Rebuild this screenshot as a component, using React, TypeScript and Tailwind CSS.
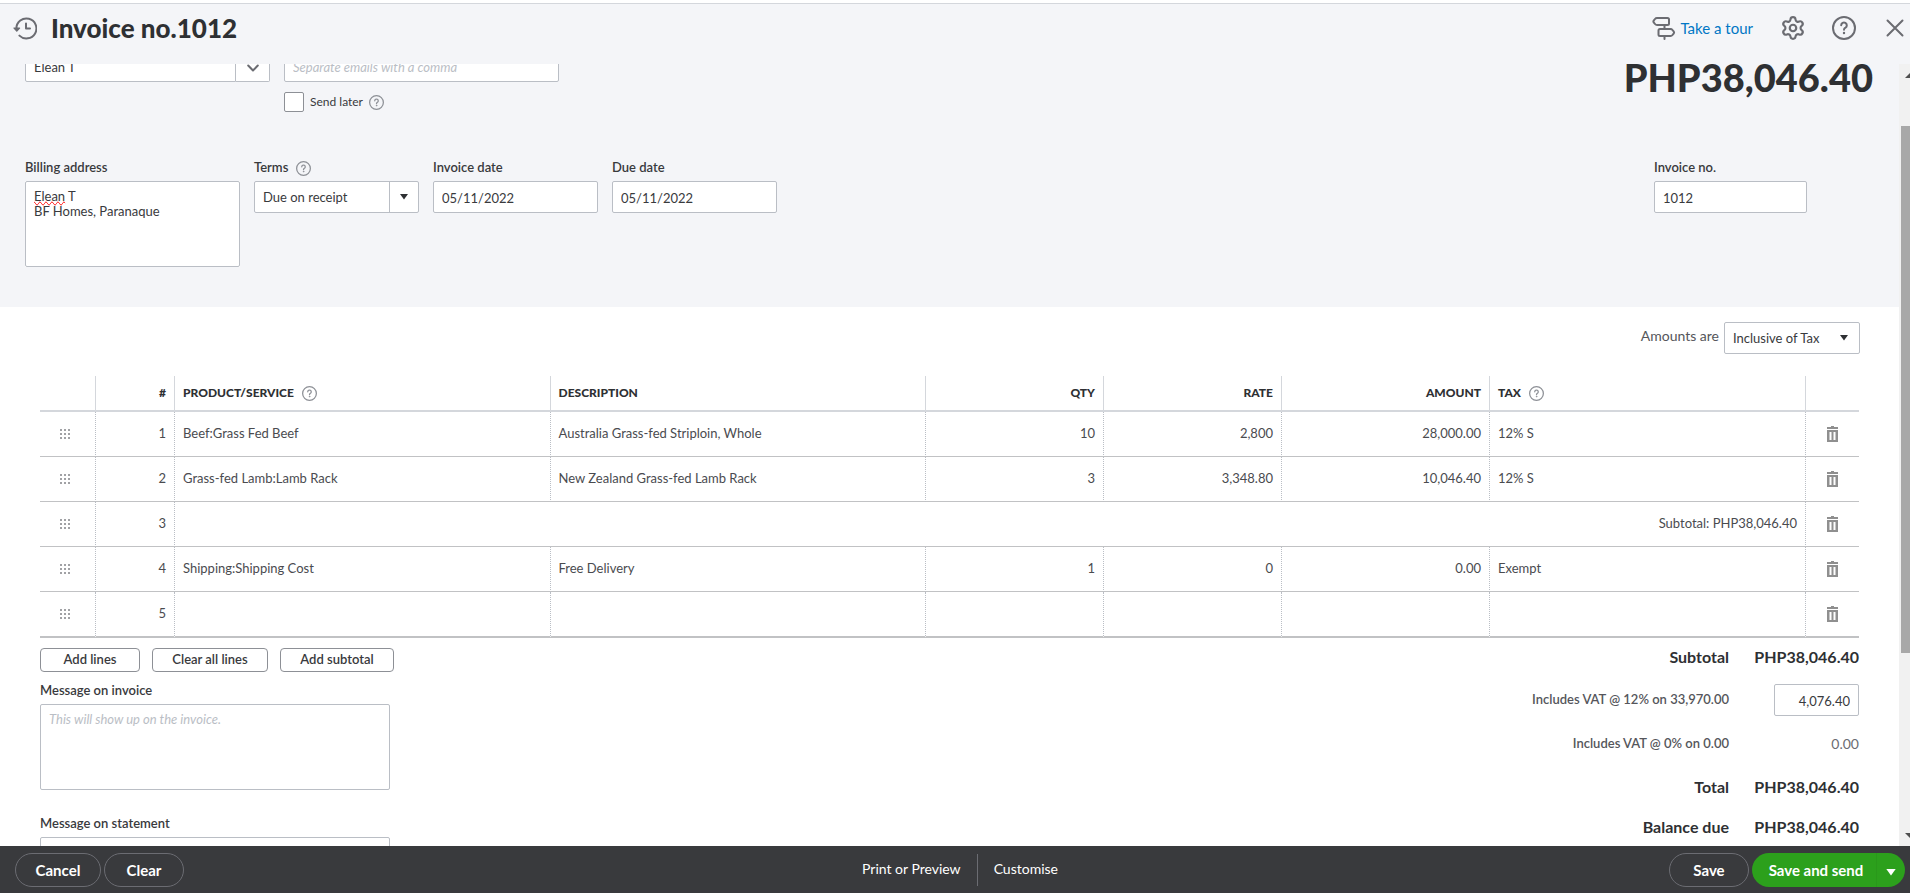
import type { ReactNode } from 'react'
import clsx from 'clsx'
import { Settings } from 'lucide-react'

type Line = {
  id: number
  product?: string
  description?: string
  qty?: string
  rate?: string
  amount?: string
  tax?: string
  subtotal?: string
}

const LINES: Line[] = [
  { id: 1, product: 'Beef:Grass Fed Beef', description: 'Australia Grass-fed Striploin, Whole', qty: '10', rate: '2,800', amount: '28,000.00', tax: '12% S' },
  { id: 2, product: 'Grass-fed Lamb:Lamb Rack', description: 'New Zealand Grass-fed Lamb Rack', qty: '3', rate: '3,348.80', amount: '10,046.40', tax: '12% S' },
  { id: 3, subtotal: 'Subtotal: PHP38,046.40' },
  { id: 4, product: 'Shipping:Shipping Cost', description: 'Free Delivery', qty: '1', rate: '0', amount: '0.00', tax: 'Exempt' },
  { id: 5 },
]

const DOTS = [1, 5, 9]

const FIELD = 'h-8 rounded-xs border border-[#babec5] bg-white px-2 pt-px text-[13px] text-[#393a3d] outline-none'
const AREA = 'block h-[86px] w-full resize-none rounded-xs border border-[#babec5] px-2 py-[7px] text-[13px] leading-[15px] text-[#393a3d] outline-none placeholder:italic placeholder:text-[#babec5]'
const LABEL = 'flex h-5 items-center gap-2 text-[13px] font-semibold text-[#393a3d]'
const SMALL_BUTTON = 'h-6 rounded border border-[#8d9096] bg-white text-[13px] font-semibold text-[#393a3d]'
const PILL = 'h-[34px] rounded-full border border-[#6b6c72] pt-px text-[15px] font-bold text-white'

function HelpIcon({ className = 'size-[15px] text-[#8d9096]' }: { className?: string }) {
  return (
    <svg viewBox="0 0 24 24" fill="none" stroke="currentColor" strokeWidth="2" strokeLinecap="round" className={clsx('shrink-0', className)} aria-hidden="true">
      <circle cx="12" cy="12" r="11" />
      <path d="M9.2 9.3a2.8 2.8 0 1 1 4.3 2.4c-1 .6-1.5 1.1-1.5 2.1" />
      <circle cx="12" cy="17" r="0.6" fill="currentColor" strokeWidth="1.2" />
    </svg>
  )
}

function HistoryIcon() {
  return (
    <svg viewBox="0 0 24 24" fill="none" stroke="currentColor" strokeWidth="2" strokeLinecap="round" strokeLinejoin="round" className="size-6" aria-hidden="true">
      <path d="M3.4 12.5A10 10 0 1 1 6.4 19.6" />
      <path d="M13 7.5V12.5h4" />
      <path d="M1 12h5.6l-2.8 3.2z" fill="currentColor" strokeWidth="1.2" />
    </svg>
  )
}

function SignpostIcon() {
  return (
    <svg viewBox="0 0 24 24" fill="none" stroke="currentColor" strokeWidth="2" strokeLinejoin="round" strokeLinecap="round" className="size-6" aria-hidden="true">
      <path d="M5 2h10.5q1.5 0 1.5 1.5v4Q17 9 15.5 9H5Q3.8 9 3 8L1.7 6.3q-.6-.8 0-1.6L3 3Q3.8 2 5 2z" />
      <path d="M8 13h10.5q1.2 0 2 1l1.3 1.7q.6.8 0 1.6L20.5 19q-.8 1-2 1H8q-1.5 0-1.5-1.5v-4Q6.5 13 8 13z" />
      <path d="M12.5 9v4M12.5 20v3" />
    </svg>
  )
}

function Caret({ className }: { className?: string }) {
  return (
    <svg viewBox="0 0 8 6" className={clsx('h-[6px] w-2', className)} fill="currentColor" aria-hidden="true">
      <path d="M0 0h8L4 5.5z" />
    </svg>
  )
}

function TrashIcon() {
  return (
    <svg viewBox="0 0 11 16" className="h-4 w-[11px]" fill="currentColor" aria-hidden="true">
      <path d="M4 0h3v1H4zM0 1h11v2H0z" />
      <path d="M0 4h11v12H0zM2.5 6v8h2V6zM6.5 6v8h2V6z" fillRule="evenodd" />
    </svg>
  )
}

function DragHandle() {
  return (
    <svg viewBox="0 0 10 10" className="size-[10px]" fill="#a1a2a5" aria-hidden="true">
      {DOTS.map((y) => DOTS.map((x) => <rect key={`${x}-${y}`} x={x - 1} y={y - 1} width="2" height="2" />))}
    </svg>
  )
}

function Field({ id, label, help, className, children }: { id: string; label: string; help?: boolean; className?: string; children: ReactNode }) {
  return (
    <div className={className}>
      <div className={LABEL}>
        <label htmlFor={id}>{label}</label>
        {help && <HelpIcon />}
      </div>
      <div className="mt-[3px]">{children}</div>
    </div>
  )
}

function Header() {
  return (
    <header className="flex h-[61px] shrink-0 items-start justify-between border-t border-[#d4d7dc] bg-[#f4f5f8] pt-2 pr-[5px] pl-[13px] text-[#6b6c72]">
      <div className="flex h-8 items-center gap-[14px]">
        <HistoryIcon />
        <h1 className="text-[26px] leading-8 font-black text-[#2e3033]">Invoice no.1012</h1>
      </div>
      <div className="flex h-8 items-center">
        <a href="#tour" className="flex items-center gap-1">
          <SignpostIcon />
          <span className="text-[15px] text-[#0077c5]">Take a tour</span>
        </a>
        <button type="button" aria-label="Settings" className="ml-[27px]">
          <Settings className="size-[26px]" strokeWidth={2} />
        </button>
        <button type="button" aria-label="Help" className="ml-[26px]">
          <HelpIcon className="size-6" />
        </button>
        <button type="button" aria-label="Close" className="ml-[29px]">
          <svg viewBox="0 0 20 20" className="size-5" stroke="currentColor" strokeWidth="2" strokeLinecap="round" aria-hidden="true">
            <path d="M2.5 2.5l15 15M17.5 2.5l-15 15" />
          </svg>
        </button>
      </div>
    </header>
  )
}

function InvoiceDetails() {
  return (
    <section className="-mt-[14px] bg-[#f4f5f8] pr-[26px] pb-10 pl-[25px]">
      <div className="flex h-[62px] items-start justify-between">
        <div className="flex gap-[14px]">
          <div className="flex w-[245px]">
            <input aria-label="Customer" defaultValue="Elean T" className={clsx(FIELD, 'min-w-0 flex-1 rounded-r-none')} />
            <button type="button" aria-label="Choose customer" className="grid h-8 w-[34px] place-items-center rounded-r-xs border border-l-0 border-[#babec5] bg-white pt-1">
              <svg viewBox="0 0 12 8" className="h-2 w-3" fill="none" stroke="#6b6c72" strokeWidth="2" strokeLinecap="round" strokeLinejoin="round" aria-hidden="true">
                <path d="M1.2 1.5L6 6.5l4.8-5" />
              </svg>
            </button>
          </div>
          <div>
            <input aria-label="Customer email" placeholder="Separate emails with a comma" className={clsx(FIELD, 'w-[275px] placeholder:text-[#babec5] placeholder:italic')} />
            <div className="mt-[10px] flex h-5 items-center gap-[6px]">
              <input id="send-later" type="checkbox" className="size-5 appearance-none rounded-xs border border-[#8d9096] bg-white" />
              <label htmlFor="send-later" className="text-xs text-[#393a3d]">Send later</label>
              <HelpIcon />
            </div>
          </div>
        </div>
        <p className="pt-2 text-[38px] leading-[38px] font-black text-[#2e3033]">PHP38,046.40</p>
      </div>

      <div className="mt-[46px] flex items-start gap-[14px] pr-[66px]">
        <Field id="address" label="Billing address" className="w-[215px]">
          <div className="relative bg-white">
            <textarea id="address" className={clsx(AREA, 'bg-white')} defaultValue={'Elean T\nBF Homes, Paranaque'} />
            {/* spell-check mark over the first word */}
            <span aria-hidden="true" className="pointer-events-none absolute top-[7px] left-[9px] text-[13px] leading-[15px] text-transparent [text-decoration-line:spelling-error]">Elean</span>
          </div>
        </Field>
        <Field id="terms" label="Terms" help className="w-[165px]">
          <div className="relative">
            <select id="terms" className={clsx(FIELD, 'w-full appearance-none')}>
              <option>Due on receipt</option>
            </select>
            <span className="pointer-events-none absolute inset-y-px right-px grid w-[29px] place-items-center border-l border-[#babec5] text-[#2e3033]">
              <Caret />
            </span>
          </div>
        </Field>
        <Field id="invoice-date" label="Invoice date" className="w-[165px]">
          <input id="invoice-date" defaultValue="05/11/2022" className={clsx(FIELD, 'w-full')} />
        </Field>
        <Field id="due-date" label="Due date" className="w-[165px]">
          <input id="due-date" defaultValue="05/11/2022" className={clsx(FIELD, 'w-full')} />
        </Field>
        <Field id="invoice-no" label="Invoice no." className="ml-auto w-[153px]">
          <input id="invoice-no" defaultValue="1012" className={clsx(FIELD, 'w-full')} />
        </Field>
      </div>
    </section>
  )
}

function LinesTable() {
  const th = 'border-r border-[#d4d7dc] px-2 text-xs font-black text-[#2e3033]'
  const td = 'border-r border-dotted border-r-[#babec5] px-2'
  return (
    <table className="mt-[22px] w-full table-fixed border-separate border-spacing-0 text-[13px] text-[#4a4b4f]">
      <colgroup>
        <col className="w-[56px]" />
        <col className="w-[79px]" />
        <col />
        <col />
        <col className="w-[178px]" />
        <col className="w-[178px]" />
        <col className="w-[208px]" />
        <col className="w-[316px]" />
        <col className="w-[53px]" />
      </colgroup>
      <thead>
        <tr className="h-9 [&>th]:border-b-2 [&>th]:border-b-[#d4d7dc]">
          <th className={th} aria-label="Reorder" />
          <th className={clsx(th, 'text-right')}>#</th>
          <th className={clsx(th, 'text-left')}>
            <span className="flex items-center gap-2">PRODUCT/SERVICE <HelpIcon /></span>
          </th>
          <th className={clsx(th, 'text-left')}>DESCRIPTION</th>
          <th className={clsx(th, 'text-right')}>QTY</th>
          <th className={clsx(th, 'text-right')}>RATE</th>
          <th className={clsx(th, 'text-right')}>AMOUNT</th>
          <th className={clsx(th, 'text-left')}>
            <span className="flex items-center gap-2">TAX <HelpIcon /></span>
          </th>
          <th aria-label="Delete" />
        </tr>
      </thead>
      <tbody>
        {LINES.map((line) => (
          <tr key={line.id} className="h-[45px] last:h-[46px] [&>td]:[border-bottom:1px_solid_#c1c2c4] last:[&>td]:[border-bottom:2px_solid_#c1c2c4]">
            <td className={clsx(td, 'pl-5')}>
              <DragHandle />
            </td>
            <td className={clsx(td, 'text-right')}>{line.id}</td>
            {line.subtotal ? (
              <td colSpan={6} className={clsx(td, 'text-right')}>{line.subtotal}</td>
            ) : (
              <>
                <td className={td}>{line.product}</td>
                <td className={td}>{line.description}</td>
                <td className={clsx(td, 'text-right')}>{line.qty}</td>
                <td className={clsx(td, 'text-right')}>{line.rate}</td>
                <td className={clsx(td, 'text-right')}>{line.amount}</td>
                <td className={td}>{line.tax}</td>
              </>
            )}
            <td>
              <button type="button" aria-label={`Delete line ${line.id}`} className="mx-auto block text-[#8f8f8f]">
                <TrashIcon />
              </button>
            </td>
          </tr>
        ))}
      </tbody>
    </table>
  )
}

function Totals() {
  const row = 'grid grid-cols-[auto_108px] items-center gap-[22px] text-right'
  const strong = 'text-base font-bold text-[#2e3033]'
  const vat = 'text-[13px] font-semibold text-[#55565b]'
  return (
    <div>
      <div className={clsx(row, strong, 'h-[38px]')}>
        <span>Subtotal</span>
        <span>PHP38,046.40</span>
      </div>
      <div className={clsx(row, 'mt-2 h-8')}>
        <label htmlFor="vat" className={vat}>Includes VAT @ 12% on 33,970.00</label>
        <input id="vat" defaultValue="4,076.40" className={clsx(FIELD, 'w-[85px] justify-self-end text-right')} />
      </div>
      <div className={clsx(row, 'mt-[10px] h-9')}>
        <span className={vat}>Includes VAT @ 0% on 0.00</span>
        <span className="text-sm text-[#6b6c72]">0.00</span>
      </div>
      <div className={clsx(row, strong, 'mt-[7px] h-9')}>
        <span>Total</span>
        <span>PHP38,046.40</span>
      </div>
      <div className={clsx(row, strong, 'mt-1 h-9')}>
        <span>Balance due</span>
        <span>PHP38,046.40</span>
      </div>
    </div>
  )
}

function Footer() {
  return (
    <footer className="grid h-[47px] shrink-0 grid-cols-[1fr_auto_1fr] items-center bg-[#393a3d] pt-px pr-[5px] pl-[15px] text-white">
      <div className="flex gap-[3px]">
        <button type="button" className={clsx(PILL, 'w-[86px]')}>Cancel</button>
        <button type="button" className={clsx(PILL, 'w-20')}>Clear</button>
      </div>
      <div className="flex h-8 items-center text-sm">
        <button type="button" className="h-8 border-r border-[#6b6c72] pr-4 pb-[2px]">Print or Preview</button>
        <button type="button" className="h-8 pb-[2px] pl-4">Customise</button>
      </div>
      <div className="flex justify-end gap-[3px]">
        <button type="button" className={clsx(PILL, 'w-20')}>Save</button>
        <div className="flex h-[34px] w-[153px] rounded-full bg-[#2ca01c] text-[15px] font-bold">
          <button type="button" className="flex-1 rounded-l-full border-r border-[#2a981b] pt-px pl-1">Save and send</button>
          <button type="button" aria-label="More save options" className="grid w-7 place-items-center rounded-r-full pt-1">
            <Caret className="h-[7px] w-[10px]" />
          </button>
        </div>
      </div>
    </footer>
  )
}

export default function App() {
  return (
    <div className="flex h-screen flex-col bg-white pt-[3px] font-['Lato',sans-serif]">
      <Header />
      <div className="flex min-h-0 flex-1">
        <main className="min-w-0 flex-1 overflow-hidden">
          <InvoiceDetails />
          <section className="px-10 pt-[15px]">
            <div className="-mr-px flex justify-end gap-[5px]">
              <label htmlFor="amounts-are" className="pt-1 text-sm text-[#55565b]">Amounts are</label>
              <div className="relative">
                <select id="amounts-are" className={clsx(FIELD, 'w-[136px] appearance-none')}>
                  <option>Inclusive of Tax</option>
                </select>
                <Caret className="pointer-events-none absolute top-[13px] right-3 text-[#2e3033]" />
              </div>
            </div>

            <LinesTable />

            <div className="flex items-start justify-between">
              <div>
                <div className="mt-[10px] flex gap-3">
                  <button type="button" className={clsx(SMALL_BUTTON, 'w-[100px]')}>Add lines</button>
                  <button type="button" className={clsx(SMALL_BUTTON, 'w-[116px]')}>Clear all lines</button>
                  <button type="button" className={clsx(SMALL_BUTTON, 'w-[114px]')}>Add subtotal</button>
                </div>
                <Field id="invoice-message" label="Message on invoice" className="mt-[9px] w-[350px]">
                  <textarea id="invoice-message" className={AREA} placeholder="This will show up on the invoice." />
                </Field>
                <Field id="statement-message" label="Message on statement" className="mt-6 w-[350px]">
                  <textarea id="statement-message" className={AREA} />
                </Field>
              </div>
              <Totals />
            </div>
          </section>
        </main>

        {/* Scroll track */}
        <div className="flex w-[11px] flex-col overflow-hidden bg-[#f1f1f1] pl-[2px] text-[#505050]" aria-hidden="true">
          <div className="h-[62px] pt-[9px] pl-1">
            <svg viewBox="0 0 5 5" className="size-[5px]" fill="currentColor">
              <path d="M5 0v5H0z" />
            </svg>
          </div>
          <div className="flex-[527] bg-[#a8a8a8]" />
          <div className="flex flex-[193] items-end pl-1">
            <svg viewBox="0 0 5 5" className="mb-2 size-[5px]" fill="currentColor">
              <path d="M5 5V0H0z" />
            </svg>
          </div>
        </div>
      </div>
      <Footer />
    </div>
  )
}
